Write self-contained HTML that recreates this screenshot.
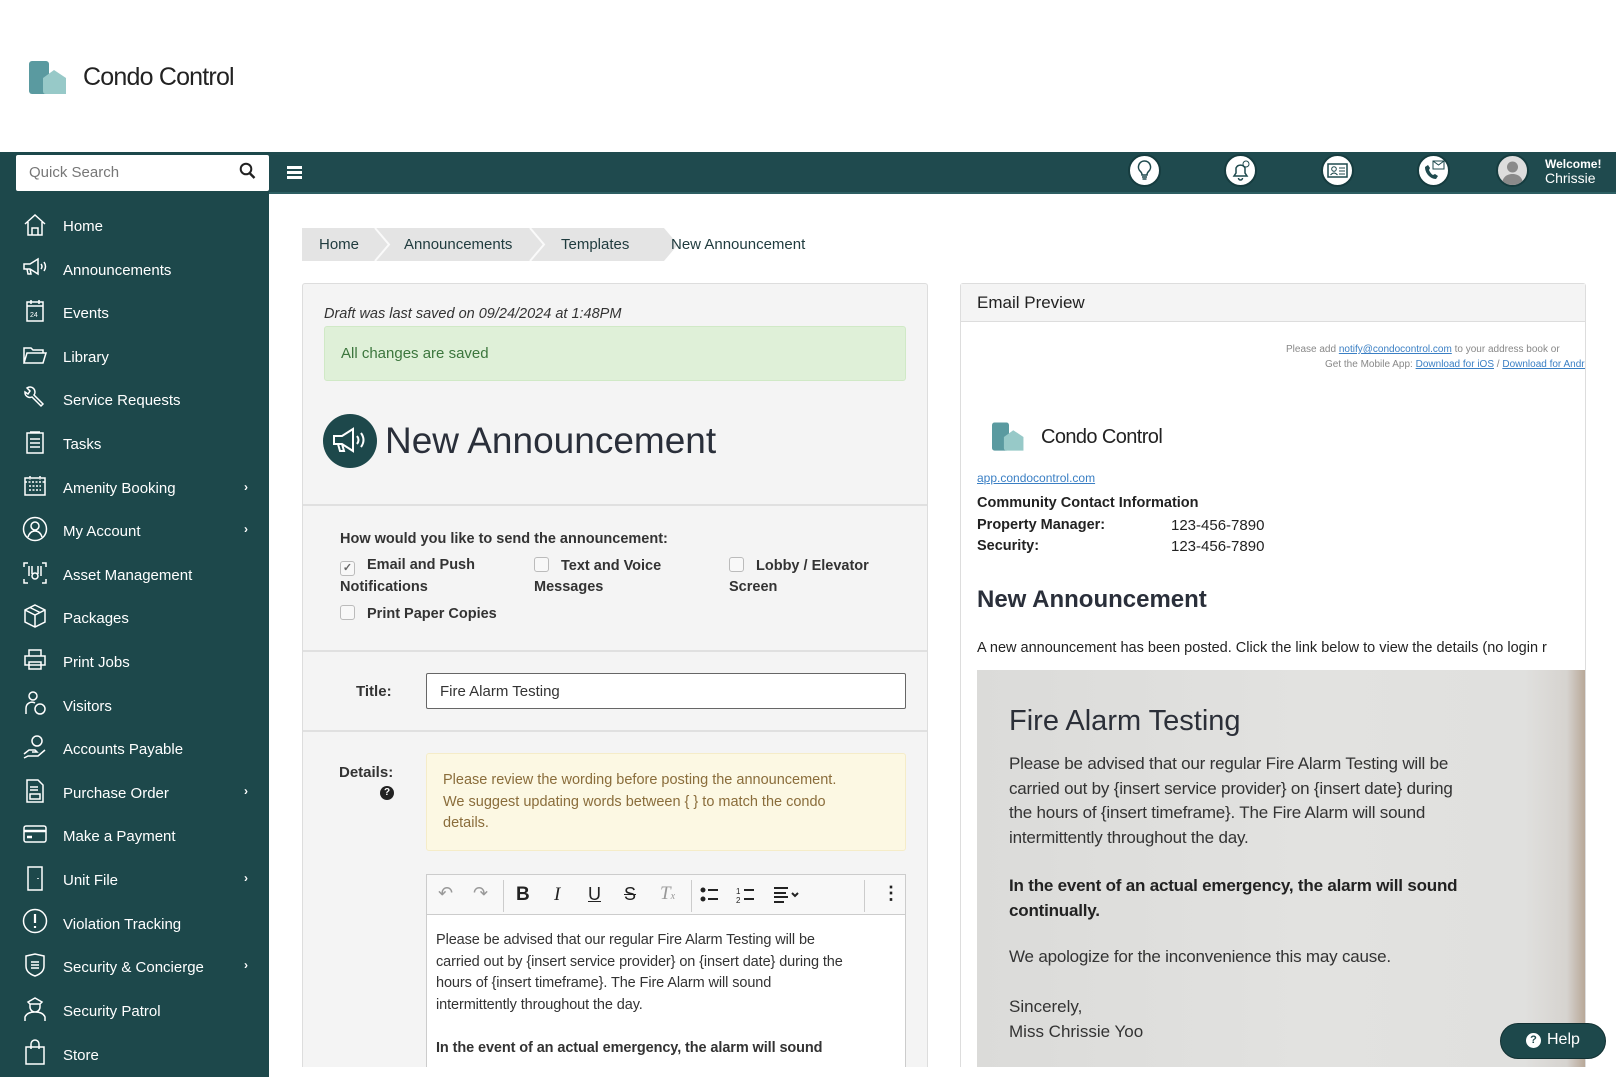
<!DOCTYPE html>
<html><head><meta charset="utf-8"><style>
*{box-sizing:border-box;margin:0;padding:0}
body{width:1616px;height:1077px;overflow:hidden;background:#fff;font-family:"Liberation Sans",sans-serif;color:#222;position:relative}
.a{position:absolute;white-space:nowrap}
.side{position:absolute;left:0;top:152px;width:269px;height:925px;background:#1d484b}
.top{position:absolute;left:0;top:152px;width:1616px;height:42px;background:#1f4a4e;border-bottom:2px solid #2d5e62}
.nav{position:absolute;left:63px;color:#fff;font-size:15px;white-space:nowrap}
.ic{position:absolute;left:22px;width:26px;height:26px}
.chev{position:absolute;left:244px;color:#fff;font-size:12px;font-weight:bold}
.hi{position:absolute;top:154px;width:33px;height:33px;border-radius:50%;background:#fff;border:2px solid #163c3f}
.panel{position:absolute;top:283px;height:784px;background:#f4f4f4;border:1px solid #ddd;border-bottom:none;border-radius:3px 3px 0 0}
.cb{display:inline-block;width:15px;height:15px;border:1px solid #bbb;border-radius:3px;background:#f8f8f8;vertical-align:-2px;margin-right:12px}
.lbl{font-size:14.5px;font-weight:bold;color:#333}
</style></head><body>

<svg class="a" style="left:29px;top:61px" width="40" height="34" viewBox="0 0 40 34"><rect x="0" y="0" width="20" height="33" rx="3" fill="#5a9aa0"/><path d="M14 17 L25 9 L37 17 V33 H17 Q14 33 14 30 Z" fill="#97c9c8"/></svg>
<div class="a" style="left:83px;top:63px;font-size:25px;color:#222;letter-spacing:-0.8px">Condo Control</div>

<div class="top"></div>
<div class="side"></div>
<div class="a" style="left:16px;top:155px;width:253px;height:36px;background:#fff;border-radius:2px"></div>
<div class="a" style="left:29px;top:164px;font-size:15px;color:#777">Quick Search</div>
<svg class="a" style="left:239px;top:162px" width="17" height="18" viewBox="0 0 17 18"><circle cx="7" cy="7" r="5.3" fill="none" stroke="#222" stroke-width="2"/><path d="M11 11.5 L15.5 16" stroke="#222" stroke-width="2.4"/></svg>
<div class="a" style="left:287px;top:166px;width:15px;height:2.5px;background:#fff;box-shadow:0 5px 0 #fff,0 10px 0 #fff"></div>

<div class="hi" style="left:1128px"><svg width="29" height="29" viewBox="0 0 29 29"><path d="M14.5 5a6 6 0 0 0-4 10.5c1 1 1.5 2 1.5 3.5h5c0-1.5.5-2.5 1.5-3.5A6 6 0 0 0 14.5 5z M12 21h5 M12.5 23h4" fill="none" stroke="#1f4a4e" stroke-width="1.5"/></svg></div>
<div class="hi" style="left:1224px"><svg width="29" height="29" viewBox="0 0 29 29"><path d="M8 20h13l-2-3v-5a5 5 0 0 0-9 0v5z M12.5 22a2 2 0 0 0 4 0" fill="none" stroke="#1f4a4e" stroke-width="1.5"/><circle cx="20" cy="8" r="3" fill="#fff" stroke="#1f4a4e"/></svg></div>
<div class="hi" style="left:1321px"><svg width="29" height="29" viewBox="0 0 29 29"><rect x="5" y="8" width="19" height="13" fill="none" stroke="#1f4a4e" stroke-width="1.5"/><circle cx="11" cy="13" r="2.3" fill="none" stroke="#1f4a4e"/><path d="M7.5 19q3.5-4 7 0M16 12h6M16 15h6M16 18h6" stroke="#1f4a4e" fill="none"/></svg></div>
<div class="hi" style="left:1417px"><svg width="29" height="29" viewBox="0 0 29 29"><path d="M6 11c0 6 5 12 11 12l2-3-3-2-2 1c-2-1-3-3-4-5l1-2-2-3z" fill="#1f4a4e"/><rect x="14" y="5" width="11" height="8" fill="#fff" stroke="#1f4a4e"/><path d="M14 5l5.5 4 5.5-4" fill="none" stroke="#1f4a4e"/></svg></div>
<div class="hi" style="left:1496px;background:#ddd;overflow:hidden"><svg width="29" height="29" viewBox="0 0 29 29"><circle cx="14.5" cy="11" r="5.5" fill="#8a8a8a"/><path d="M4 29c0-8 5-11 10.5-11S25 21 25 29z" fill="#8a8a8a"/></svg></div>
<div class="a" style="left:1545px;top:157px;color:#fff;font-size:12px;font-weight:bold">Welcome!</div>
<div class="a" style="left:1545px;top:170px;color:#fff;font-size:14px">Chrissie</div>

<svg class="ic" style="top:212px" viewBox="0 0 26 26" fill="none" stroke="#fff" stroke-width="1.5"><path d="M3 12L13 3l10 9M6 10v13h14V10M10 23v-7h6v7"/></svg><div class="nav" style="top:218px">Home</div>
<svg class="ic" style="top:255px" viewBox="0 0 26 26" fill="none" stroke="#fff" stroke-width="1.5"><path d="M2 9h6l8-5v15l-8-5H2zM5 14l1 5h3l-1-5M19 9q2 2.5 0 5M22 7q3 4.5 0 9"/></svg><div class="nav" style="top:262px">Announcements</div>
<svg class="ic" style="top:298px" viewBox="0 0 26 26" fill="none" stroke="#fff" stroke-width="1.5"><rect x="5" y="4" width="16" height="19"/><path d="M5 8h16M9 2v4M17 2v4"/><text x="8" y="19" font-size="7" fill="#fff" stroke="none">24</text></svg><div class="nav" style="top:305px">Events</div>
<svg class="ic" style="top:342px" viewBox="0 0 26 26" fill="none" stroke="#fff" stroke-width="1.5"><path d="M2 21V6h7l2 2h10v3M2 21l3-10h19l-3 10z"/></svg><div class="nav" style="top:349px">Library</div>
<svg class="ic" style="top:385px" viewBox="0 0 26 26" fill="none" stroke="#fff" stroke-width="1.5"><path d="M5 3l3 3-2 3-3-2a5 5 0 0 0 7 5l9 9 2-2-9-9a5 5 0 0 0-7-7z"/></svg><div class="nav" style="top:392px">Service Requests</div>
<svg class="ic" style="top:429px" viewBox="0 0 26 26" fill="none" stroke="#fff" stroke-width="1.5"><rect x="5" y="4" width="16" height="20"/><path d="M8 10h10M8 14h10M8 18h10M8 3h10"/></svg><div class="nav" style="top:436px">Tasks</div>
<svg class="ic" style="top:473px" viewBox="0 0 26 26" fill="none" stroke="#fff" stroke-width="1.5"><rect x="3" y="5" width="20" height="17"/><path d="M3 9h20M8 3v4M18 3v4M7 13h12M7 17h12" stroke-dasharray="2 1.5"/></svg><div class="nav" style="top:480px">Amenity Booking</div><div class="chev" style="top:480px">&#8250;</div>
<svg class="ic" style="top:516px" viewBox="0 0 26 26" fill="none" stroke="#fff" stroke-width="1.5"><circle cx="13" cy="13" r="11.5"/><circle cx="13" cy="10" r="4"/><path d="M6 21q2-6 7-6t7 6"/></svg><div class="nav" style="top:523px">My Account</div><div class="chev" style="top:522px">&#8250;</div>
<svg class="ic" style="top:560px" viewBox="0 0 26 26" fill="none" stroke="#fff" stroke-width="1.5"><path d="M2 7V3h4M24 7V3h-4M2 19v4h4M24 19v4h-4M7 6v10M10 6v8M16 6v8M19 6v10"/><circle cx="13" cy="16" r="3"/></svg><div class="nav" style="top:567px">Asset Management</div>
<svg class="ic" style="top:603px" viewBox="0 0 26 26" fill="none" stroke="#fff" stroke-width="1.5"><path d="M13 2l10 5v12l-10 5-10-5V7zM3 7l10 5 10-5M13 12v12M8 4.5l10 5"/></svg><div class="nav" style="top:610px">Packages</div>
<svg class="ic" style="top:647px" viewBox="0 0 26 26" fill="none" stroke="#fff" stroke-width="1.5"><path d="M7 9V3h12v6M3 9h20v9H3zM7 15h12v7H7z"/></svg><div class="nav" style="top:654px">Print Jobs</div>
<svg class="ic" style="top:690px" viewBox="0 0 26 26" fill="none" stroke="#fff" stroke-width="1.5"><circle cx="11" cy="6" r="4"/><path d="M4 24v-6a6 6 0 0 1 9-5"/><circle cx="18" cy="19" r="5"/></svg><div class="nav" style="top:698px">Visitors</div>
<svg class="ic" style="top:734px" viewBox="0 0 26 26" fill="none" stroke="#fff" stroke-width="1.5"><circle cx="15" cy="7" r="5"/><path d="M2 20l5-4h6l2 2h-5M2 24l4-2h10l7-6"/></svg><div class="nav" style="top:741px">Accounts Payable</div>
<svg class="ic" style="top:778px" viewBox="0 0 26 26" fill="none" stroke="#fff" stroke-width="1.5"><path d="M5 2h11l5 5v17H5zM8 9h8M8 12h8M8 16h10v5H8z"/></svg><div class="nav" style="top:785px">Purchase Order</div><div class="chev" style="top:784px">&#8250;</div>
<svg class="ic" style="top:821px" viewBox="0 0 26 26" fill="none" stroke="#fff" stroke-width="1.5"><rect x="2" y="5" width="22" height="16" rx="2"/><path d="M2 10h22M5 16h5" stroke-width="2.5"/></svg><div class="nav" style="top:828px">Make a Payment</div>
<svg class="ic" style="top:865px" viewBox="0 0 26 26" fill="none" stroke="#fff" stroke-width="1.5"><rect x="6" y="2" width="14" height="23"/><path d="M16 13v1"/></svg><div class="nav" style="top:872px">Unit File</div><div class="chev" style="top:871px">&#8250;</div>
<svg class="ic" style="top:908px" viewBox="0 0 26 26" fill="none" stroke="#fff" stroke-width="1.5"><circle cx="13" cy="13" r="11.5"/><path d="M13 6v9M13 18v2" stroke-width="2.2"/></svg><div class="nav" style="top:916px">Violation Tracking</div>
<svg class="ic" style="top:952px" viewBox="0 0 26 26" fill="none" stroke="#fff" stroke-width="1.5"><path d="M4 4l9-2 9 2v10q0 7-9 10-9-3-9-10z M9 10h8M9 13h8M9 16h8"/></svg><div class="nav" style="top:959px">Security &amp; Concierge</div><div class="chev" style="top:958px">&#8250;</div>
<svg class="ic" style="top:996px" viewBox="0 0 26 26" fill="none" stroke="#fff" stroke-width="1.5"><path d="M6 6l7-4 7 4-2 2H8zM8 8v3a5 5 0 0 0 10 0V8M3 25v-4q2-5 10-5t10 5v4"/></svg><div class="nav" style="top:1003px">Security Patrol</div>
<svg class="ic" style="top:1039px" viewBox="0 0 26 26" fill="none" stroke="#fff" stroke-width="1.5"><path d="M4 8h18v17H4zM9 10V5a4 4 0 0 1 8 0v5"/></svg><div class="nav" style="top:1047px">Store</div>

<svg class="a" style="left:302px;top:228px" width="380" height="33"><path d="M0 0H362L376 16.5 362 33H0z" fill="#e4e4e4"/><path d="M73 0l14 16.5L73 33M228 0l14 16.5L228 33" fill="none" stroke="#fafafa" stroke-width="2"/></svg>
<div class="a" style="left:319px;top:236px;font-size:15px;color:#1f3b3e">Home</div>
<div class="a" style="left:404px;top:236px;font-size:15px;color:#1f3b3e">Announcements</div>
<div class="a" style="left:561px;top:236px;font-size:15px;color:#1f3b3e">Templates</div>
<div class="a" style="left:671px;top:236px;font-size:15px;color:#1f3b3e">New Announcement</div>

<div class="panel" style="left:302px;width:626px"></div>
<div class="a" style="left:324px;top:306px;font-size:14.5px;font-style:italic;color:#333">Draft was last saved on 09/24/2024 at 1:48PM</div>
<div class="a" style="left:324px;top:326px;width:582px;height:55px;background:#dff0d8;border:1px solid #d0e9c6;border-radius:3px"></div>
<div class="a" style="left:341px;top:345px;font-size:15px;color:#3c763d">All changes are saved</div>
<div class="a" style="left:323px;top:414px;width:54px;height:54px;border-radius:50%;background:#1d484b"></div>
<svg class="a" style="left:331px;top:425px" width="38" height="32" viewBox="0 0 38 32" fill="none" stroke="#fff" stroke-width="2"><path d="M3 11h8l11-7v22l-11-7H3zM7 19l2 7h4l-2-7M26 11q3 4 0 8M30 8q5 7 0 14"/></svg>
<div class="a" style="left:385px;top:420px;font-size:37px;color:#2a2f3a">New Announcement</div>
<div class="a" style="left:303px;top:504px;width:624px;height:2px;background:#e0e0e0"></div>
<div class="a lbl" style="left:340px;top:531px">How would you like to send the announcement:</div>
<div class="a lbl" style="left:340px;top:557px"><span class="cb" style="text-align:center;font-size:11px;line-height:13px;color:#666">&#10003;</span>Email and Push</div>
<div class="a lbl" style="left:340px;top:579px">Notifications</div>
<div class="a lbl" style="left:534px;top:557px"><span class="cb"></span>Text and Voice</div>
<div class="a lbl" style="left:534px;top:579px">Messages</div>
<div class="a lbl" style="left:729px;top:557px"><span class="cb"></span>Lobby / Elevator</div>
<div class="a lbl" style="left:729px;top:579px">Screen</div>
<div class="a lbl" style="left:340px;top:605px"><span class="cb"></span>Print Paper Copies</div>
<div class="a" style="left:303px;top:650px;width:624px;height:2px;background:#e0e0e0"></div>
<div class="a lbl" style="left:356px;top:683px;font-size:15px">Title:</div>
<div class="a" style="left:426px;top:673px;width:480px;height:36px;background:#fff;border:1px solid #666;border-radius:2px"></div>
<div class="a" style="left:440px;top:683px;font-size:15px;color:#333">Fire Alarm Testing</div>
<div class="a" style="left:303px;top:730px;width:624px;height:2px;background:#e0e0e0"></div>
<div class="a lbl" style="left:339px;top:764px;font-size:15px">Details:</div>
<div class="a" style="left:380px;top:786px;width:14px;height:14px;border-radius:50%;background:#222;color:#fff;font-size:10px;font-weight:bold;text-align:center;line-height:14px">?</div>
<div class="a" style="left:426px;top:753px;width:480px;height:98px;background:#fcf8e3;border:1px solid #f5ecc8;border-radius:3px"></div>
<div class="a" style="left:443px;top:770px;font-size:14.5px;line-height:21.5px;color:#8a6d3b">Please review the wording before posting the announcement.<br>We suggest updating words between { } to match the condo<br>details.</div>
<div class="a" style="left:426px;top:874px;width:480px;height:193px;background:#fff;border:1px solid #ccc;border-bottom:none"></div>
<div class="a" style="left:427px;top:875px;width:478px;height:40px;background:#f8f8f8;border-bottom:1px solid #ccc"></div>
<div class="a" style="left:438px;top:883px;font-size:18px;color:#999">&#8630;</div>
<div class="a" style="left:473px;top:883px;font-size:18px;color:#999">&#8631;</div>
<div class="a" style="left:503px;top:880px;width:1px;height:32px;background:#ccc"></div>
<div class="a" style="left:516px;top:884px;font-size:19px;font-weight:bold;color:#222">B</div>
<div class="a" style="left:554px;top:884px;font-size:19px;font-style:italic;color:#222;font-family:'Liberation Serif',serif">I</div>
<div class="a" style="left:588px;top:884px;font-size:18px;text-decoration:underline;color:#222">U</div>
<div class="a" style="left:624px;top:884px;font-size:18px;text-decoration:line-through;color:#222">S</div>
<div class="a" style="left:660px;top:883px;font-size:19px;font-style:italic;color:#999;font-family:'Liberation Serif',serif">T<span style="font-size:10px">x</span></div>
<div class="a" style="left:691px;top:880px;width:1px;height:32px;background:#ccc"></div>
<svg class="a" style="left:700px;top:885px" width="100" height="20" fill="none" stroke="#222" stroke-width="2"><circle cx="3" cy="5" r="1.5" fill="#222"/><circle cx="3" cy="14" r="1.5" fill="#222"/><path d="M8 5h10M8 14h10M44 5h10M44 14h10M74 3h14M74 8h12M74 12h14M74 17h10M92 8l3 3 3-3"/><text x="36" y="9" font-size="8" fill="#222" stroke="none">1</text><text x="36" y="18" font-size="8" fill="#222" stroke="none">2</text></svg>
<div class="a" style="left:864px;top:880px;width:1px;height:32px;background:#ccc"></div>
<div class="a" style="left:882px;top:883px;font-size:18px;font-weight:bold;color:#222">&#8942;</div>
<div class="a" style="left:436px;top:930px;font-size:14.5px;line-height:21.5px;color:#333;letter-spacing:-0.1px">Please be advised that our regular Fire Alarm Testing will be<br>carried out by {insert service provider} on {insert date} during the<br>hours of {insert timeframe}. The Fire Alarm will sound<br>intermittently throughout the day.<br><br><b>In the event of an actual emergency, the alarm will sound</b></div>

<div class="panel" style="left:960px;width:626px;background:#fff"></div>
<div class="a" style="left:961px;top:284px;width:624px;height:38px;background:#f4f4f4;border-bottom:1px solid #ddd"></div>
<div class="a" style="left:977px;top:293px;font-size:17px;color:#222">Email Preview</div>
<div class="a" style="left:961px;top:340px;width:624px;height:32px;overflow:hidden">
<div class="a" style="left:325px;top:4px;font-size:10px;color:#888">Please add <u style="color:#3a7fc4">notify@condocontrol.com</u> to your address book or</div>
<div class="a" style="left:364px;top:19px;font-size:10px;color:#888">Get the Mobile App: <u style="color:#3a7fc4">Download for iOS</u> / <u style="color:#3a7fc4">Download for Android</u></div>
</div>
<svg class="a" style="left:992px;top:422px" width="34" height="30" viewBox="0 0 40 34"><rect x="0" y="0" width="20" height="33" rx="3" fill="#5a9aa0"/><path d="M14 17 L25 9 L37 17 V33 H17 Q14 33 14 30 Z" fill="#97c9c8"/></svg>
<div class="a" style="left:1041px;top:426px;font-size:20px;color:#222;letter-spacing:-0.6px">Condo Control</div>
<div class="a" style="left:977px;top:471px;font-size:12px;color:#3a7fc4;text-decoration:underline">app.condocontrol.com</div>
<div class="a" style="left:977px;top:495px;font-size:14.5px;font-weight:bold">Community Contact Information</div>
<div class="a" style="left:977px;top:517px;font-size:14.5px;font-weight:bold">Property Manager:</div>
<div class="a" style="left:1171px;top:517px;font-size:15px">123-456-7890</div>
<div class="a" style="left:977px;top:538px;font-size:14.5px;font-weight:bold">Security:</div>
<div class="a" style="left:1171px;top:538px;font-size:15px">123-456-7890</div>
<div class="a" style="left:977px;top:586px;font-size:24px;font-weight:bold;color:#2a2f3a">New Announcement</div>
<div class="a" style="left:977px;top:640px;font-size:14.5px;color:#222;width:608px;overflow:hidden">A new announcement has been posted. Click the link below to view the details (no login r</div>
<div class="a" style="left:977px;top:670px;width:608px;height:397px;background:linear-gradient(90deg,#dbdbd9 0%,#e2e2e0 55%,#e0e0de 90%,#d6d3cf 97%,#b8a898 100%)"></div>
<div class="a" style="left:1009px;top:705px;font-size:29px;color:#2b2f38">Fire Alarm Testing</div>
<div class="a" style="left:1009px;top:752px;font-size:17px;line-height:24.7px;color:#333;letter-spacing:-0.2px">Please be advised that our regular Fire Alarm Testing will be<br>carried out by {insert service provider} on {insert date} during<br>the hours of {insert timeframe}. The Fire Alarm will sound<br>intermittently throughout the day.</div>
<div class="a" style="left:1009px;top:874px;font-size:17px;line-height:24.7px;color:#222;font-weight:bold;letter-spacing:-0.2px">In the event of an actual emergency, the alarm will sound<br>continually.</div>
<div class="a" style="left:1009px;top:947px;font-size:17px;color:#333;letter-spacing:-0.2px">We apologize for the inconvenience this may cause.</div>
<div class="a" style="left:1009px;top:997px;font-size:17px;color:#333">Sincerely,</div>
<div class="a" style="left:1009px;top:1022px;font-size:17px;color:#333">Miss Chrissie Yoo</div>
<div class="a" style="left:270px;top:1067px;width:1346px;height:10px;background:#fff"></div>

<div class="a" style="left:1500px;top:1023px;width:106px;height:36px;border-radius:18px;background:#1d484b;border:1px solid #123133"></div>
<div class="a" style="left:1526px;top:1033px;width:15px;height:15px;border-radius:50%;background:#fff;color:#1d484b;font-size:11px;font-weight:bold;text-align:center;line-height:15px">?</div>
<div class="a" style="left:1547px;top:1031px;font-size:16px;color:#fff">Help</div>
</body></html>
